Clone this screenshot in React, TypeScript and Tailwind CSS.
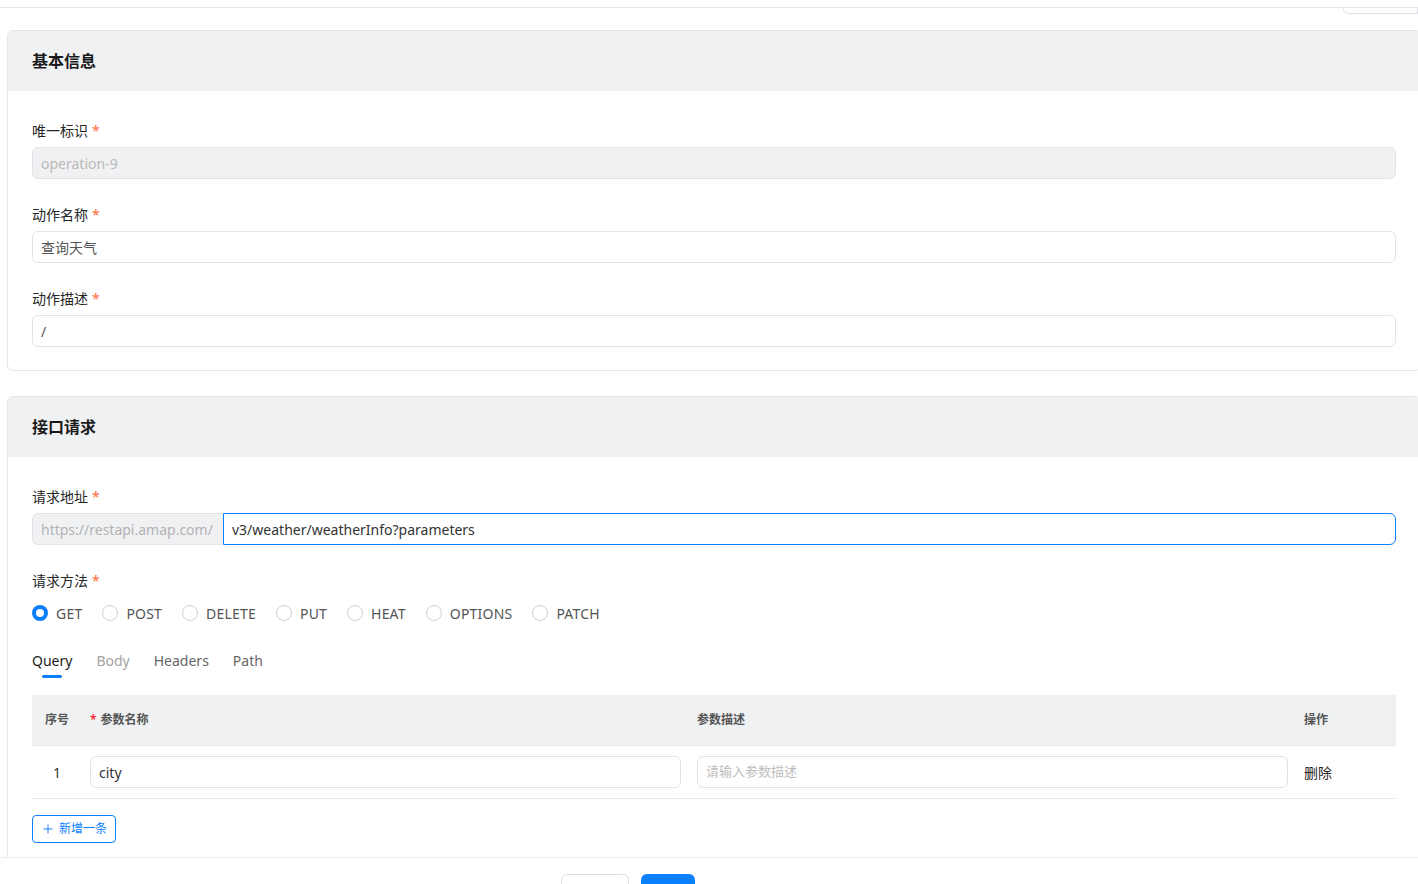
import { Plus } from 'lucide-react';

const methods = ['GET', 'POST', 'DELETE', 'PUT', 'HEAT', 'OPTIONS', 'PATCH'];
const tabs = ['Query', 'Body', 'Headers', 'Path'];

function Label({ text }: { text: string }) {
  return (
    <div className="h-[22px] mb-[6px] flex items-center text-[14px] text-[#262626]">
      {text}
      <span className="ml-[4px] text-[#ff6a3d]">*</span>
    </div>
  );
}

function Card({ title, children }: { title: string; children: React.ReactNode }) {
  return (
    <div className="w-[1414px] border border-[#e4e5e8] rounded-[6px] overflow-hidden bg-white">
      <div className="h-[60px] bg-[#f0f1f3] flex items-center px-[24px] text-[16px] font-bold text-[#1a1a1a]">
        {title}
      </div>
      <div className="px-[24px] pt-[28px] pb-[23px]">{children}</div>
    </div>
  );
}

export default function App() {
  return (
    <div
      className="w-[1418px] h-[884px] overflow-hidden bg-white flex flex-col"
      style={{ fontFamily: '"Noto Sans", "Noto Sans CJK SC", sans-serif' }}
    >
      <div className="flex-1 overflow-hidden">
        {/* top strip */}
        <div className="h-[8px] border-b border-[#e6e7ea]" />
        <div className="h-[6px] flex justify-end">
          <div className="w-[75px] border-x border-b border-[#dfe1e5] rounded-bl-[5px]" />
        </div>

        <div className="pl-[7px] pt-[16px] flex flex-col gap-[25px]">
          {/* 基本信息 */}
          <Card title="基本信息">
            <div className="mb-[24px]">
              <Label text="唯一标识" />
              <div className="h-[32px] w-[1364px] rounded-[6px] border border-[#e2e3e6] bg-[#f0f1f3] px-[8px] flex items-center text-[14px] text-[#b9b9b9]">
                operation-9
              </div>
            </div>
            <div className="mb-[24px]">
              <Label text="动作名称" />
              <div className="h-[32px] w-[1364px] rounded-[6px] border border-[#e2e3e6] px-[8px] flex items-center text-[14px] text-[#555]">
                查询天气
              </div>
            </div>
            <div>
              <Label text="动作描述" />
              <div className="h-[32px] w-[1364px] rounded-[6px] border border-[#e2e3e6] px-[8px] flex items-center text-[14px] text-[#555]">
                /
              </div>
            </div>
          </Card>

          {/* 接口请求 */}
          <Card title="接口请求">
            <div className="mb-[24px]">
              <Label text="请求地址" />
              <div className="flex h-[32px] w-[1364px] text-[14px]">
                <div className="w-[191px] bg-[#f0f1f3] border border-r-0 border-[#e2e3e6] rounded-l-[6px] px-[8px] flex items-center text-[#b3b3b3]">
                  https://restapi.amap.com/
                </div>
                <div className="flex-1 border border-[#0a80ff] rounded-r-[6px] px-[8px] flex items-center text-[#333]">
                  v3/weather/weatherInfo?parameters
                </div>
              </div>
            </div>

            <div>
              <Label text="请求方法" />
              <div className="h-[32px] flex items-center gap-[20px] text-[14px] text-[#555]">
                {methods.map((m, i) => (
                  <div key={m} className="flex items-center gap-[8px]">
                    {i === 0 ? (
                      <span className="w-[16px] h-[16px] rounded-full border-[4px] border-[#0a80ff] bg-white" />
                    ) : (
                      <span className="w-[16px] h-[16px] rounded-full border border-[#cfd2d6] bg-white" />
                    )}
                    <span className="tracking-[0.2px]">{m}</span>
                  </div>
                ))}
              </div>
            </div>

            {/* tabs */}
            <div className="mt-[21px] mb-[17px] flex gap-[24px] text-[14px]">
              {tabs.map((t, i) => (
                <div key={t} className="flex flex-col items-center">
                  <span className={`leading-[22px] ${i === 0 ? 'text-[#1a1a1a]' : i === 1 ? 'text-[#a3a3a3]' : 'text-[#666]'}`}>
                    {t}
                  </span>
                  <span className={`mt-[3px] h-[3px] w-[20px] rounded-full ${i === 0 ? 'bg-[#0a80ff]' : 'bg-transparent'}`} />
                </div>
              ))}
            </div>

            {/* table */}
            <div className="w-[1364px]">
              <div className="h-[51px] bg-[#f0f1f3] border-b border-[#e6e7ea] flex items-center text-[12px] font-semibold text-[#555]">
                <div className="w-[50px] text-center">序号</div>
                <div className="w-[607px] px-[8px] flex items-center">
                  <span className="text-[#f5222d] mr-[4px]">*</span>参数名称
                </div>
                <div className="w-[607px] px-[8px]">参数描述</div>
                <div className="w-[100px] px-[8px]">操作</div>
              </div>
              <div className="h-[53px] border-b border-[#e6e7ea] flex items-center text-[14px]">
                <div className="w-[50px] text-center text-[#333]">1</div>
                <div className="w-[607px] px-[8px]">
                  <div className="h-[32px] rounded-[6px] border border-[#e2e3e6] px-[8px] flex items-center text-[#333]">city</div>
                </div>
                <div className="w-[607px] px-[8px]">
                  <div className="h-[32px] rounded-[6px] border border-[#e2e3e6] px-[8px] flex items-center text-[13px] text-[#bdbdbd]">
                    请输入参数描述
                  </div>
                </div>
                <div className="w-[100px] px-[8px] text-[#262626]">删除</div>
              </div>
            </div>

            <div className="mt-[16px] mb-[40px]">
              <button className="h-[28px] px-[8px] rounded-[4px] border border-[#0a80ff] text-[#0a80ff] text-[12px] flex items-center gap-[4px]">
                <Plus size={14} strokeWidth={1.6} />
                新增一条
              </button>
            </div>
          </Card>
        </div>
      </div>

      {/* footer */}
      <div className="h-[27px] shrink-0 border-t border-[#ececee] bg-white overflow-hidden pt-[16px] pl-[561px] flex gap-[12px]">
        <button className="h-[32px] w-[68px] rounded-[6px] border border-[#dcdfe4] bg-white" />
        <button className="h-[32px] w-[54px] rounded-[6px] bg-[#0a80ff]" />
      </div>
    </div>
  );
}
